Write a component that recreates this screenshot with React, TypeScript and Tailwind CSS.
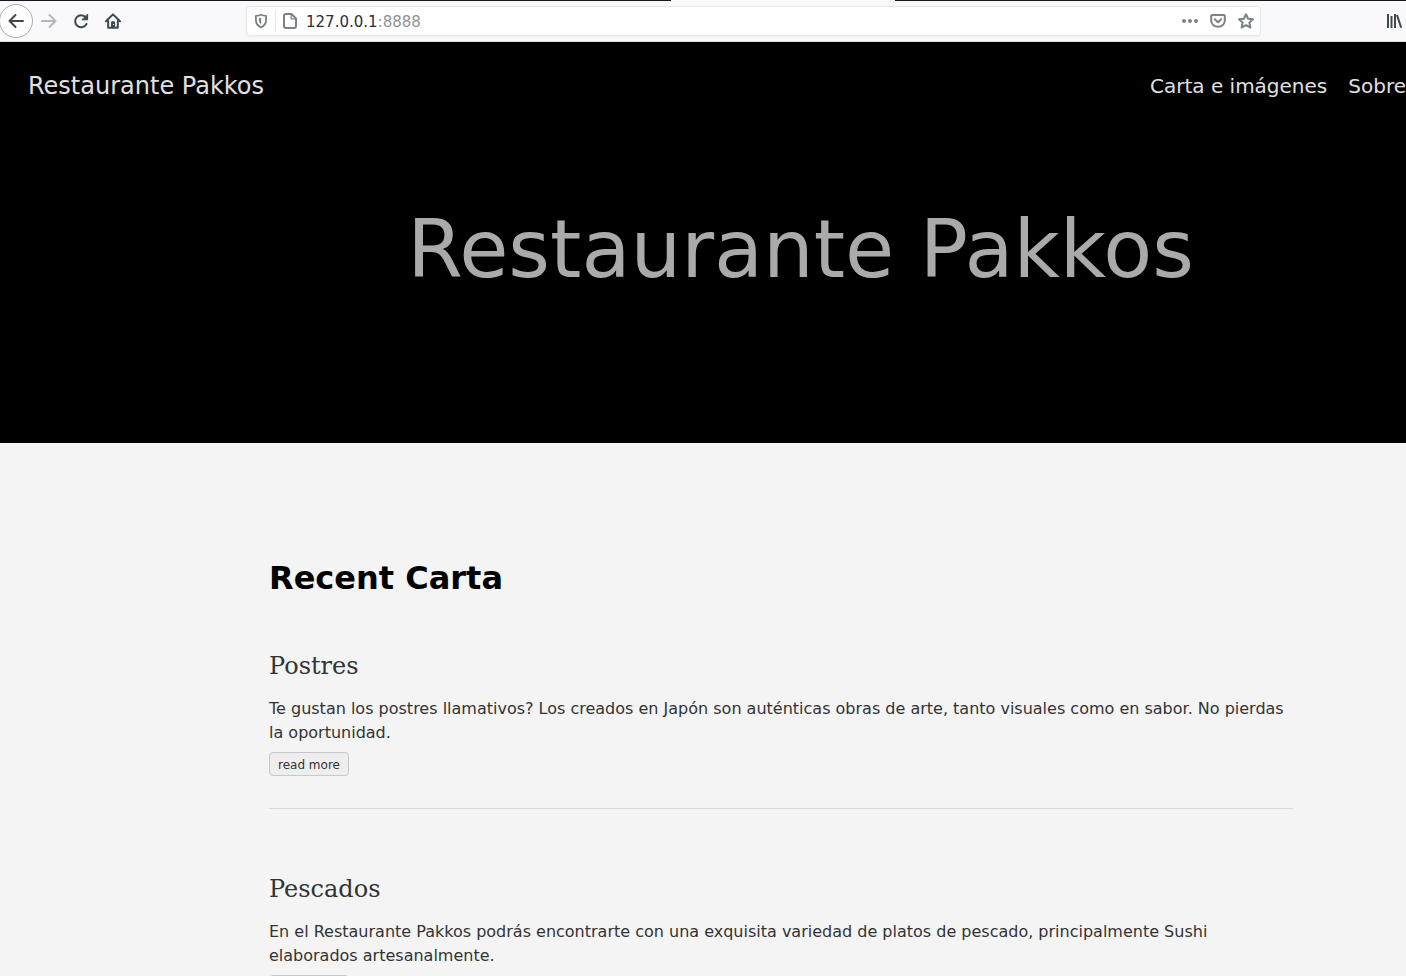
import type { ReactNode } from 'react';

interface Dish {
  title: string;
  summary: string;
}

const dishes: Dish[] = [
  {
    title: 'Postres',
    summary:
      'Te gustan los postres llamativos? Los creados en Japón son auténticas obras de arte, tanto visuales como en sabor. No pierdas la oportunidad.',
  },
  {
    title: 'Pescados',
    summary:
      'En el Restaurante Pakkos podrás encontrarte con una exquisita variedad de platos de pescado, principalmente Sushi elaborados artesanalmente.',
  },
];

function Icon({ children }: { children: ReactNode }) {
  return (
    <svg
      viewBox="0 0 16 16"
      className="size-4 shrink-0"
      fill="none"
      stroke="currentColor"
      strokeWidth="2"
      strokeLinecap="round"
      strokeLinejoin="round"
      aria-hidden="true"
    >
      {children}
    </svg>
  );
}

function Toolbar() {
  return (
    <div className="bg-[#f9f9fb] text-[#3f484e]">
      <div className="flex h-px bg-[#16181f]">
        <div className="ml-[671px] w-56 bg-[#f9f9fb]" />
      </div>
      <div className="flex h-[41px] items-center border-b border-[#dfe1e4]">
        <div className="flex w-[246px] shrink-0 items-center gap-4">
          <button
            aria-label="Back"
            className="-ml-px -mr-2 flex size-[34px] shrink-0 items-center justify-center rounded-full border border-[#aaacae] bg-white"
          >
            <Icon>
              <path d="M15 8H1.5M7.5 2 1.5 8l6 6" />
            </Icon>
          </button>
          <button aria-label="Forward" className="text-[#b4b7ba]">
            <Icon>
              <path d="M1 8h13.5M8.5 2l6 6-6 6" />
            </Icon>
          </button>
          <button aria-label="Reload">
            <Icon>
              <path d="M12.8 4.4A6 6 0 1 0 13.5 11" />
              <path d="M14.6 1.5v5.3H9.3z" fill="currentColor" strokeWidth="1" />
            </Icon>
          </button>
          <button aria-label="Home">
            <Icon>
              <path d="M1 8.2 8 1.4l7 6.8M3.2 8v6.8h9.6V8" />
              <path d="M6 15V9.4c0-.8.4-1.2 1.2-1.2h1.6c.8 0 1.2.4 1.2 1.2V15z" fill="currentColor" stroke="none" />
              <path d="M8.5 11v1" stroke="#f9f9fb" strokeWidth="1" strokeLinecap="butt" />
            </Icon>
          </button>
        </div>
        <div className="mr-[125px] flex h-[30px] min-w-0 flex-1 items-center rounded-sm border border-[#e4e8ec] bg-white px-1.5 text-[#7b8286] shadow-xs">
          <button aria-label="Site protection">
            <Icon>
              <path
                d="M8 1.7C6.4 2.4 4.6 2.7 2.9 2.8v4c0 3.9 2 6.3 5.100 7.500 3.100-1.200 5.100-3.600 5.100-7.500v-4C11.400 2.700 9.600 2.400 8 1.700z"
                strokeWidth="1.8"
              />
              <path d="M8.200 4.800v6.700C6.800 10.400 6 9 6 6.800V5.300z" fill="currentColor" stroke="none" />
            </Icon>
          </button>
          <span className="mx-1.5 h-[22px] w-px bg-[#e4e6e8]" />
          <Icon>
            <path d="M4 1h5.5L14 5.5V13a2 2 0 0 1-2 2H4a2 2 0 0 1-2-2V3a2 2 0 0 1 2-2z" />
            <path d="M9.2 1.5v4.3h4.3" strokeWidth="1.3" />
          </Icon>
          <label className="relative ml-2 flex min-w-0 flex-1 items-center pt-0.5 text-[15px] leading-5">
            <span aria-hidden="true" className="text-[#2a2f34]">
              127.0.0.1<span className="text-[#8f9396]">:8888</span>
            </span>
            <input
              aria-label="Address"
              className="absolute inset-0 w-full bg-transparent outline-none"
            />
          </label>
          <div className="flex items-center gap-3">
            <button aria-label="Page actions">
              <Icon>
                <path d="M2 8h.01M8 8h.01M14 8h.01" strokeWidth="4" />
              </Icon>
            </button>
            <button aria-label="Save to Pocket">
              <Icon>
                <path d="M2.2 2h11.6a1 1 0 0 1 1 1v4.5a6.8 6.3 0 0 1-13.6 0V3a1 1 0 0 1 1-1z" />
                <path d="M4.8 6.2 8 9.3l3.2-3.1" />
              </Icon>
            </button>
            <button aria-label="Bookmark">
              <Icon>
                <path d="m8 1.3 2.1 4.4 4.9.6-3.6 3.3 1 4.9L8 12.1l-4.4 2.4 1-4.9L1 6.3l4.9-.6z" />
              </Icon>
            </button>
          </div>
        </div>
        <button aria-label="Library" className="mr-1">
          <Icon>
            <path d="M2 1v14M5.5 3v12M9 1v14M11 2l4.2 12.7" strokeLinecap="butt" />
          </Icon>
        </button>
      </div>
    </div>
  );
}

export default function App() {
  return (
    <div className="min-h-screen overflow-hidden bg-[#f4f4f4] font-['DejaVu_Sans',sans-serif] text-[#333333]">
      <Toolbar />
      <header className="bg-black pb-[143px]">
        <nav className="flex items-center justify-between pt-6 pl-7 text-[#e0e0e0]">
          <a href="#inicio" className="text-2xl leading-10">
            Restaurante Pakkos
          </a>
          <div className="flex gap-[21px] text-xl leading-10">
            <a href="#carta">Carta e imágenes</a>
            <a href="#sobre">Sobre</a>
          </div>
        </nav>
        <h1 className="mt-[94px] pl-[195px] text-center text-[80px] leading-[100px] text-[#aaaaaa]">
          Restaurante Pakkos
        </h1>
      </header>
      <main className="mr-[113px] ml-[269px] pt-[115px]">
        <h2 className="text-[32px] leading-10 font-bold text-black">Recent Carta</h2>
        <div className="mt-[53px] flex flex-col gap-[65px]">
          {dishes.map((dish) => (
            <article key={dish.title} className="border-b border-[#d9d9d9] pb-8">
              <h3 className="font-['DejaVu_Serif',serif] text-2xl leading-[30px]">{dish.title}</h3>
              <p className="mt-4 text-base">{dish.summary}</p>
              <a
                href={'#' + dish.title.toLowerCase()}
                className="mt-[7px] flex h-6 w-20 items-center justify-center rounded-sm border border-[#c8c8c8] bg-[#eeeeee] pt-0.5 text-xs"
              >
                read more
              </a>
            </article>
          ))}
        </div>
      </main>
    </div>
  );
}
